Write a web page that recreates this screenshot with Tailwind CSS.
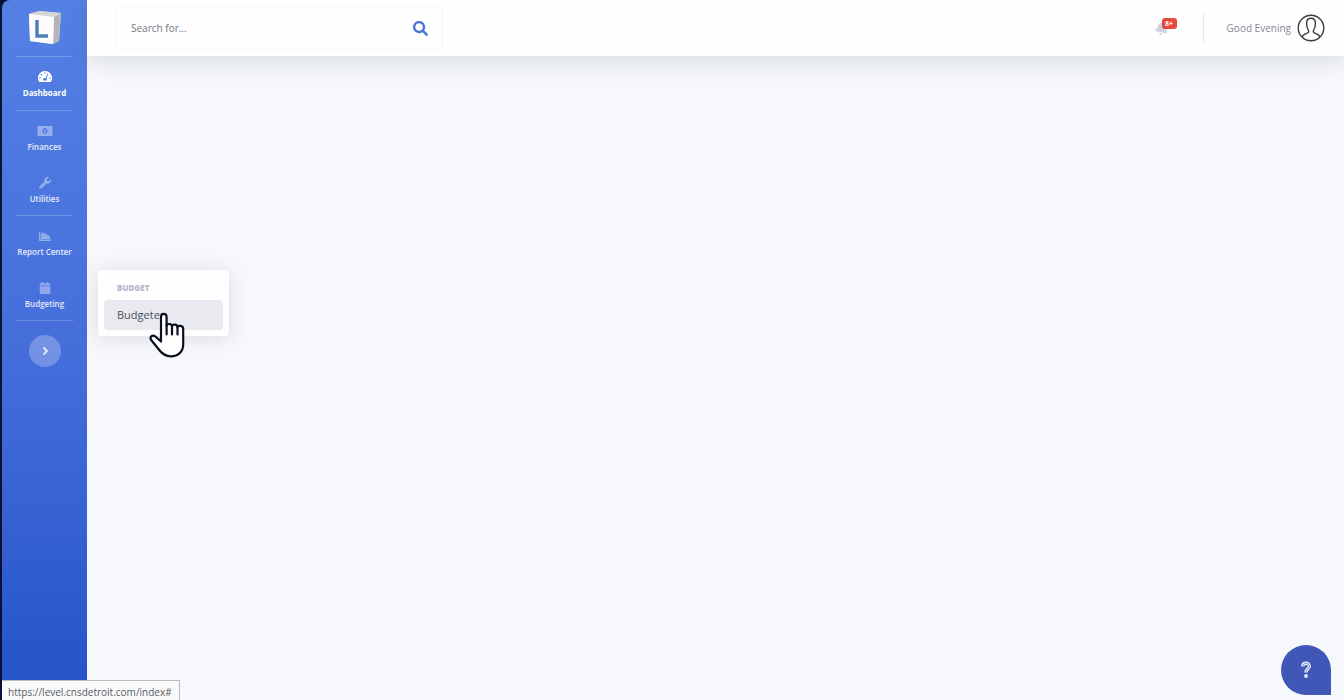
<!DOCTYPE html>
<html lang="en">
<head>
<meta charset="utf-8">
<title>Level</title>
<script src="https://cdn.jsdelivr.net/npm/@tailwindcss/browser@4"></script>
</head>
<body class="relative flex min-h-screen overflow-hidden bg-[#071236] font-['Open_Sans','Noto_Sans',sans-serif]">
  <nav aria-label="Main" class="ml-[2px] flex w-[85px] shrink-0 flex-col rounded-tl-lg bg-linear-to-b from-[#5580e4] via-[#456edb] to-[#2453c8] px-3 text-[8px] leading-3 font-semibold text-white/85">
    <a href="#" aria-label="Level home" class="flex h-14 items-center justify-center">
      <svg class="size-9" viewBox="0 0 36 36">
        <path d="M2 4 12 1 34 3 32 31 26 34 3 31Z" fill="#e6e7e9"/>
        <path d="M27 7 34 3 32 31 26 34Z" fill="#b4b5b9"/>
        <path d="M2 4 12 1 34 3 27 7Z" fill="#d5d6d8"/>
        <path d="M2 4 27 7 26 34 3 31Z" fill="#fcfcfc"/>
        <path d="M10 10V26H21" fill="none" stroke="#4d7fb5" stroke-width="3.400"/>
      </svg>
    </a>
    <hr class="mx-0.5 border-white/20">
    <a href="#" class="flex h-[53px] flex-col items-center gap-1 pt-3.5 font-bold text-white">
      <svg class="h-3 w-3.5" viewBox="0 0 14 12" fill="currentColor"><path fill-rule="evenodd" d="M7 0a7 7 0 0 0-6 10.600c.2.300.4.400.8.400h10.400c.4 0 .6-.1.8-.4A7 7 0 0 0 7 0ZM7 1.200a.8.800 0 1 1 0 1.600.8.800 0 0 1 0-1.600ZM3.300 2.800a.8.800 0 1 1 0 1.600.8.800 0 0 1 0-1.600ZM2 6.200a.8.800 0 1 1 0 1.600.8.800 0 0 1 0-1.600Zm10 0a.8.800 0 1 1 0 1.600.8.800 0 0 1 0-1.600ZM9.300 2.700l.8.300-1.600 4.600c.5.500.6 1.300.2 2H5.300c-.7-1.200.1-2.500 1.400-2.500l1-.1Z"/></svg>
      Dashboard
    </a>
    <hr class="mx-0.5 border-white/20">
    <a href="#" class="flex h-[52px] flex-col items-center gap-1 pt-3.5">
      <svg class="h-3 w-4 text-white/40" viewBox="0 0 16 12" fill="currentColor"><path fill-rule="evenodd" d="M1 1h14q.5 0 .5.500v9q0 .5-.5.500H1q-.5 0-.5-.5v-9Q.5 1 1 1ZM8 3C6.600 3 5.500 4.300 5.500 6S6.600 9 8 9s2.500-1.300 2.500-3S9.400 3 8 3Z"/><path d="M7.300 4.500 8 4h.5v3.300H9V8H7v-.7h.5V4.800Z"/></svg>
      Finances
    </a>
    <a href="#" class="flex h-[52px] flex-col items-center gap-1 pt-3.5">
      <svg class="size-3 text-white/40" viewBox="0 0 512 512" fill="currentColor"><path d="M507.730 109.100c-2.240-9.030-13.540-12.090-20.120-5.510l-74.360 74.360-67.880-11.310-11.310-67.880 74.360-74.360c6.620-6.620 3.430-17.900-5.660-20.160-47.380-11.740-99.550.910-136.580 37.930-39.640 39.640-50.550 97.100-34.050 147.200L18.740 402.760c-24.990 24.990-24.990 65.510 0 90.500 24.990 24.990 65.510 24.990 90.500 0l213.210-213.210c50.120 16.710 107.470 5.680 147.370-34.220 37.070-37.070 49.700-89.320 37.910-136.730zM64 472c-13.250 0-24-10.750-24-24 0-13.260 10.750-24 24-24s24 10.740 24 24c0 13.250-10.750 24-24 24z"/></svg>
      Utilities
    </a>
    <hr class="mx-0.5 border-white/20">
    <a href="#" class="flex h-[52px] flex-col items-center gap-1 pt-3.5 whitespace-nowrap">
      <svg class="size-3 text-white/40" viewBox="0 0 12 12" fill="currentColor"><path d="M0 1.500h1.400v8H12V11H.5q-.5 0-.5-.5ZM2 9V4.500L3.800 2l2 2.300 1.300-1.300 1.700 2.500 1.400-.3 1 3.800Z"/></svg>
      Report Center
    </a>
    <a href="#" aria-expanded="true" class="flex h-[52px] flex-col items-center gap-1 pt-3.5">
      <svg class="size-3 text-white/40" viewBox="0 0 12 12" fill="currentColor"><path d="M2.500 0h1.700v1.300h3.600V0h1.700v1.300h.8q1 0 1 1v1.200H.7V2.300q0-1 1-1h.8ZM.7 4.200h10.600v6.700q0 1-1 1H1.700q-1 0-1-1Z"/></svg>
      Budgeting
    </a>
    <hr class="mx-0.5 border-white/20">
    <button type="button" aria-label="Expand sidebar" class="mt-3.5 flex size-8 items-center justify-center self-center rounded-full bg-white/25 text-white/80">
      <svg class="size-3" viewBox="0 0 12 12" fill="none" stroke="currentColor" stroke-width="1.800"><path d="m4.500 2.500 3.500 3.500-3.500 3.500"/></svg>
    </button>
  </nav>

  <div class="flex min-w-0 flex-1 flex-col bg-[#f6f8fc]">
    <header class="flex h-14 items-center justify-between bg-[#fefefe] pr-[19px] pl-7 shadow-[0_3px_24px_rgba(58,59,69,0.18)]">
      <form role="search" class="flex h-11 w-[328px] items-center rounded border border-[#f5f5f7]">
        <input type="search" aria-label="Search" placeholder="Search for..." class="min-w-0 flex-1 bg-transparent px-[15px] text-[10px] text-[#6e707e] outline-none placeholder:text-[#74767f]">
        <button type="button" aria-label="Search" class="mr-3.5 text-[#4a74dc]">
          <svg class="size-[15px]" viewBox="0 0 512 512" fill="currentColor"><path d="M505 442.700L405.300 343c-4.500-4.500-10.600-7-17-7H372c27.600-35.300 44-79.700 44-128C416 93.100 322.900 0 208 0S0 93.100 0 208s93.100 208 208 208c48.300 0 92.700-16.400 128-44v16.300c0 6.400 2.500 12.500 7 17l99.700 99.700c9.400 9.400 24.600 9.400 33.900 0l28.300-28.300c9.400-9.400 9.400-24.600.1-34zM208 336c-70.700 0-128-57.200-128-128 0-70.700 57.200-128 128-128 70.700 0 128 57.200 128 128 0 70.700-57.200 128-128 128z"/></svg>
        </button>
      </form>
      <div class="flex items-center">
        <button type="button" aria-label="Alerts" class="relative mr-[34px] flex text-[#d1d3dc]">
          <svg class="size-3.5 rotate-12" viewBox="0 0 448 512" fill="currentColor"><path d="M224 512c35.320 0 63.970-28.650 63.970-64H160.030c0 35.350 28.650 64 63.970 64zm215.390-149.710c-19.320-20.760-55.470-51.990-55.470-154.290 0-77.700-54.480-139.900-127.940-155.160V32c0-17.670-14.320-32-31.980-32s-31.980 14.330-31.980 32v20.840C118.560 68.100 64.080 130.300 64.080 208c0 102.300-36.150 133.530-55.470 154.290-6 6.450-8.660 14.160-8.610 21.710.110 16.400 12.980 32 32.100 32h383.800c19.120 0 32-15.600 32.100-32 .050-7.550-2.610-15.270-8.610-21.710z"/></svg>
          <span class="absolute -top-[3px] left-[7px] flex h-[11px] w-[15px] items-center justify-center rounded-[3px] bg-[#e5493d] text-[7px] leading-none font-bold text-white">8+</span>
        </button>
        <div class="h-7 border-l border-[#e6e7ec]"></div>
        <button type="button" class="ml-[23px] flex items-center gap-1.5 text-[10px] text-[#858795]">
          Good Evening
          <svg class="size-7" viewBox="0 0 28 28" fill="none" stroke="#3c3d42" stroke-width="1.400"><circle cx="14" cy="14" r="12.800" fill="#fff"/><path d="M5 23c.6-2.400 2.500-3 4.700-3.700 1.800-.6 2.600-1.400 1.600-3.300C10 13.800 9.600 12.500 9.600 9.500 9.600 6 11.300 4.300 14 4.300s4.400 1.700 4.400 5.200c0 3-.4 4.300-1.700 6.500-1 1.900-.2 2.700 1.600 3.300 2.200.7 4.100 1.300 4.700 3.700"/></svg>
        </button>
      </div>
    </header>
    <main class="flex-1"></main>
  </div>

  <section aria-label="Budget" class="absolute top-[270px] left-[98px] w-[131px] rounded bg-[#fefefe] px-1.5 pt-3 pb-1.5 shadow-[0_2px_20px_rgba(58,59,69,0.15)]">
    <h6 class="px-[13px] pb-1.5 text-[8px] leading-3 font-extrabold text-[#b7b9cc]">BUDGET</h6>
    <a href="#" class="block rounded bg-[#e9eaf0] px-[13px] py-1.5 text-[11px] leading-[18px] text-[#4c4e59]">Budgeter</a>
  </section>
  <svg class="pointer-events-none absolute top-[312px] left-[149px] h-[46px] w-9" viewBox="0 0 36 46" fill="#fff" stroke="#0c1020" stroke-width="2.200" stroke-linejoin="round" stroke-linecap="round">
    <path d="M12 29.500V5C12 .8 17.600.8 17.600 5v9c0-2.800 5.400-2.700 5.400.5 0-2.700 5.500-2.400 5.500.8 0-2.300 5.700-2 5.700 1.500V32c0 8-5.200 12.300-12.200 12.300-6.500 0-9.500-3-12.500-7.300L2.200 28c-2-3 1-5.600 4-3.600Z"/>
    <path d="M17.600 13v9.500M23 14.500v8M28.500 15.500v7" fill="none"/>
  </svg>

  <button type="button" aria-label="Help" class="absolute right-[13px] bottom-[5px] flex size-[50px] items-center justify-center rounded-full rounded-br-md bg-[#4057b8]">
    <svg class="h-[18px] w-3" viewBox="0 0 12 18" fill="none"><path d="M2.700 5.500C2.700 1.300 9.300 1.300 9.300 5.200 9.300 8 6 7.800 6 11.400" stroke="#e3e8fb" stroke-width="3.400"/><path d="M2.700 5.500C2.700 1.300 9.300 1.300 9.300 5.200 9.300 8 6 7.800 6 11.400" stroke="#7f90d6" stroke-width="1"/><circle cx="6" cy="15" r="1.900" fill="#e3e8fb"/></svg>
  </button>
  <div role="status" class="absolute bottom-0 left-[2px] h-5 w-[178px] border-t border-r border-[#b9bbbf] bg-[#f8f9fb] pl-1.5 text-[10px] leading-[22px] whitespace-nowrap text-[#5b5d62]">https://level.cnsdetroit.com/index#</div>
</body>
</html>
